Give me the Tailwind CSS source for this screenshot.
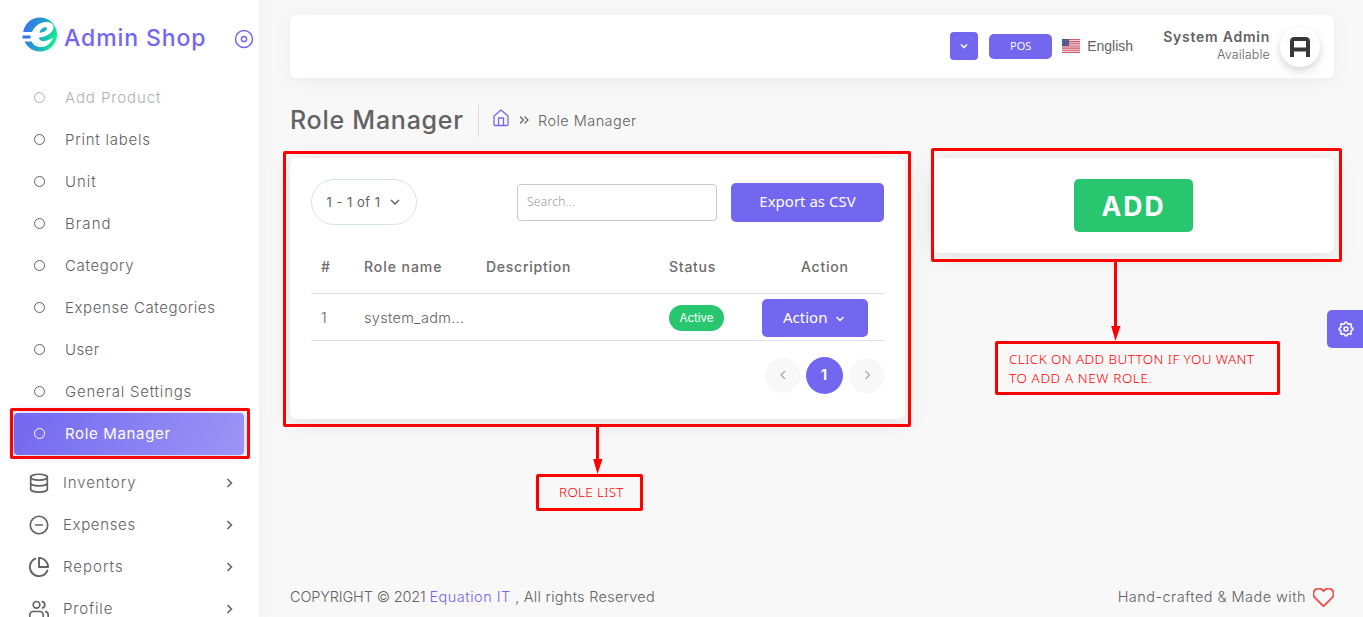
<!DOCTYPE html>
<html lang="en">
<head>
<meta charset="utf-8">
<title>Role Manager</title>
<script src="https://cdn.jsdelivr.net/npm/@tailwindcss/browser@4"></script>
</head>
<body class="relative h-[617px] w-[1363px] overflow-hidden bg-[#f8f8f8] font-['Inter',sans-serif] text-[14px] text-[#626262]">
<div class="flex h-full">
  <aside class="relative h-full w-[259px] shrink-0 overflow-hidden bg-white shadow-[0_0_15px_rgba(0,0,0,0.05)]">
    <div class="flex h-[77px] items-center pl-[22px]">
      <svg class="-mt-2 size-[36px]" viewBox="0 0 36 36"><defs><linearGradient id="lg" x1="0" y1="0.3" x2="1" y2="0.6"><stop offset="0" stop-color="#3b6ff0"/><stop offset=".5" stop-color="#22a0cc"/><stop offset="1" stop-color="#0cf58c"/></linearGradient></defs><circle cx="18" cy="17.500" r="17" fill="url(#lg)"/><path d="M0 15h12v9.500H0z" fill="#fff"/><path d="M.5 18.500h8v3H.5z" fill="#2f78ea"/><path d="M9 19C10 11 17 5 24.500 5C32 5 33.500 11 29 15.500C26 18.500 22 20 17 20.500C17 24 21 25 25 23.500C27.500 22.500 29.500 21.500 31 20.500C29 27 23.500 30.500 18 30C12 29.500 8 25 9 19Z" fill="#fff"/><path d="M17.500 15.800C18 12 22 9.500 24.500 10.500C26.500 12 23 15.500 17.500 15.800Z" fill="#21adc4"/></svg>
      <span class="-mt-px ml-1.5 text-[23px] font-medium tracking-[0.9px] text-[#7367f0]">Admin Shop</span>
      <svg class="absolute left-[234px] top-[29px] size-5" viewBox="0 0 20 20" fill="none" stroke="#7367f0" stroke-width="1.500"><circle cx="10" cy="10" r="8.500"/><circle cx="10" cy="10" r="2.600"/></svg>
    </div>
    <nav class="text-[15px] font-light tracking-[0.65px]">
      <div class="flex h-[42px] items-center pl-[34px] opacity-50"><i class="-mt-px mr-5 size-[11px] rounded-full border border-[#626262]"></i><span class="tracking-[0.9px]">Add Product</span></div>
      <div class="flex h-[42px] items-center pl-[34px]"><i class="-mt-px mr-5 size-[11px] rounded-full border border-[#626262]"></i><span class="tracking-[0.75px]">Print labels</span></div>
      <div class="flex h-[42px] items-center pl-[34px]"><i class="-mt-px mr-5 size-[11px] rounded-full border border-[#626262]"></i><span class="tracking-[1px]">Unit</span></div>
      <div class="flex h-[42px] items-center pl-[34px]"><i class="-mt-px mr-5 size-[11px] rounded-full border border-[#626262]"></i><span class="tracking-[1.1px]">Brand</span></div>
      <div class="flex h-[42px] items-center pl-[34px]"><i class="-mt-px mr-5 size-[11px] rounded-full border border-[#626262]"></i>Category</div>
      <div class="flex h-[42px] items-center pl-[34px]"><i class="-mt-px mr-5 size-[11px] rounded-full border border-[#626262]"></i><span class="tracking-[0.6px]">Expense Categories</span></div>
      <div class="flex h-[42px] items-center pl-[34px]"><i class="-mt-px mr-5 size-[11px] rounded-full border border-[#626262]"></i><span class="tracking-[0.4px]">User</span></div>
      <div class="flex h-[42px] items-center pl-[34px]"><i class="-mt-px mr-5 size-[11px] rounded-full border border-[#626262]"></i><span class="tracking-[0.78px]">General Settings</span></div>
      <div class="mx-[14px] flex h-[42px] w-[230px] items-center rounded bg-linear-118 from-[#7367f0] to-[#9e95f5] pl-5 font-normal text-white shadow-[0_0_10px_1px_rgba(115,103,240,0.4)]"><i class="-mt-px mr-5 size-[11px] rounded-full border border-white"></i>Role Manager</div>
      <div class="mt-[7px] flex h-[42px] items-center pl-[29px]"><svg class="mr-[14px] size-5 fill-none stroke-[#626262] stroke-2" viewBox="0 0 24 24" stroke-linecap="round" stroke-linejoin="round"><ellipse cx="12" cy="5" rx="10" ry="3.500"/><path d="M22 12c0 1.900-4.500 3.500-10 3.500S2 13.900 2 12M2 5v14.500c0 1.900 4.500 3.500 10 3.500s10-1.600 10-3.500V5"/></svg><span class="tracking-[0.9px]">Inventory</span><svg class="ml-auto mr-6 size-3 fill-none stroke-[#626262] stroke-[1.5]" viewBox="0 0 12 12"><path d="M4.500 2l4 4-4 4"/></svg></div>
      <div class="flex h-[42px] items-center pl-[29px]"><svg class="mr-[14px] size-5 fill-none stroke-[#626262] stroke-2" viewBox="0 0 24 24" stroke-linecap="round"><circle cx="12" cy="12" r="10.500"/><path d="M8 12h8"/></svg>Expenses<svg class="ml-auto mr-6 size-3 fill-none stroke-[#626262] stroke-[1.5]" viewBox="0 0 12 12"><path d="M4.500 2l4 4-4 4"/></svg></div>
      <div class="flex h-[42px] items-center pl-[29px]"><svg class="mr-[14px] size-5 fill-none stroke-[#626262] stroke-[2.1]" viewBox="1 1 22 22" stroke-linecap="round" stroke-linejoin="round"><path d="M21.210 15.890A10 10 0 1 1 8 2.830M22 12A10 10 0 0 0 12 2v10z"/></svg><span class="tracking-[1px]">Reports</span><svg class="ml-auto mr-6 size-3 fill-none stroke-[#626262] stroke-[1.5]" viewBox="0 0 12 12"><path d="M4.500 2l4 4-4 4"/></svg></div>
      <div class="flex h-[42px] items-center pl-[29px]"><svg class="mr-[14px] size-5 fill-none stroke-[#626262] stroke-2" viewBox="0 0 24 24" stroke-linecap="round" stroke-linejoin="round"><path d="M17 21v-2a4 4 0 0 0-4-4H5a4 4 0 0 0-4 4v2M23 21v-2a4 4 0 0 0-3-3.870M16 3.130a4 4 0 0 1 0 7.750"/><circle cx="9" cy="7" r="4"/></svg><span class="tracking-[0.85px]">Profile</span><svg class="ml-auto mr-6 size-3 fill-none stroke-[#626262] stroke-[1.5]" viewBox="0 0 12 12"><path d="M4.500 2l4 4-4 4"/></svg></div>
    </nav>
  </aside>

  <main class="flex min-w-0 flex-1 flex-col pr-[29px] pl-[31px] pt-[15px]">
    <header class="flex h-[63px] shrink-0 items-center justify-end rounded-[7px] bg-white pr-[14px] pb-0.5 shadow-[0_4px_20px_rgba(0,0,0,0.05)]">
      <button class="mr-[11px] flex size-7 items-center justify-center rounded-[4px] bg-[#7367f0]"><svg class="size-2.5 fill-none stroke-white stroke-[1.5]" viewBox="0 0 10 10"><path d="M2 3.500l3 3 3-3"/></svg></button>
      <button class="mt-px mr-2.5 h-[25px] w-[63px] rounded-[5px] bg-[#7367f0] font-['Open_Sans',sans-serif] text-[11px] text-white">POS</button>
      <svg class="mr-[7px] h-[14px] w-[18px]" viewBox="0 0 18 14"><path fill="#f3d5d9" d="M0 0h18v14H0z"/><path stroke="#cf5a6b" stroke-width="1.100" d="M0 .5h18M0 2.660h18M0 4.820h18M0 6.980h18M0 9.140h18M0 11.300h18M0 13.460h18"/><path fill="#50548a" d="M0 0h7v7H0z"/><path stroke="#8084ad" stroke-width=".6" stroke-dasharray="1 1" d="M.5 1.500h6M1 3.500h6M.5 5.500h6"/></svg>
      <span class="mt-0.5 w-[76px] font-['Liberation_Sans',sans-serif] text-[14px]">English</span>
      <div class="mr-2.5 flex flex-col items-end"><span class="text-[14px] leading-[18px] font-semibold tracking-[0.75px]">System Admin</span><span class="text-[12.500px] leading-[17px] font-light tracking-[0.15px]">Available</span></div>
      <div class="mt-0.5 flex size-10 items-center justify-center rounded-full bg-white shadow-[0_4px_8px_rgba(0,0,0,0.16)]"><svg class="h-5 w-5 fill-none stroke-[#383838] stroke-[4]" viewBox="0 0 20 20"><path d="M2 20V4.500Q2 2 4.500 2h11Q18 2 18 4.500V20M2 12.500h16"/></svg></div>
    </header>

    <div class="mt-[27px] flex h-8 items-center">
      <h1 class="w-[189px] border-r border-[#d6dce1] text-[25px] leading-8 font-[450] tracking-[0.75px] whitespace-nowrap"><span class="relative -top-px">Role Manager</span></h1>
      <svg class="mr-2.5 ml-[14px] -mt-1.5 h-[18px] w-4 fill-none stroke-[#7367f0] stroke-[1.3]" viewBox="0 0 16 18" stroke-linejoin="round"><path d="M1 7l7-6 7 6v8.500q0 1-1 1H2q-1 0-1-1zM5.500 16.500V9h5v7.500"/></svg>
      <svg class="-mt-0.5 size-2.5 fill-none stroke-[#626262] stroke-[1.2]" viewBox="0 0 10 10"><path d="M1 1.500l3.500 3.500L1 8.500M5.500 1.500L9 5 5.500 8.500"/></svg>
      <span class="-mt-px ml-[9px] font-light text-[14.500px] tracking-[0.45px]">Role Manager</span>
    </div>

    <div class="mt-[21px] flex items-start gap-7">
      <section class="h-[261px] w-[615px] rounded-[7px] bg-white px-[21px] pt-[21px] shadow-[0_4px_25px_rgba(0,0,0,0.1)]">
        <div class="flex h-[46px] items-center">
          <button class="flex h-[46px] w-[106px] items-center rounded-full border border-[#dae1e7] pl-[14.500px] text-[13px] tracking-[0.5px]"><span class="mt-0.5">1 - 1 of 1</span><svg class="ml-[9px] size-2.5 fill-none stroke-[#626262] stroke-[1.5]" viewBox="0 0 10 10"><path d="M1 3l4 4 4-4"/></svg></button>
          <div class="ml-auto h-[37px] w-[200px] rounded-[4px] border border-[#c8c8c8] pl-[9px] font-['Noto_Sans',sans-serif] text-[12px] leading-[33px] font-light tracking-[0.3px] text-[#999]">Search...</div>
          <button class="ml-[14px] h-[39px] w-[153px] rounded-[5px] bg-[#7367f0] pb-0.5 font-['Noto_Sans',sans-serif] text-[15px] text-white">Export as CSV</button>
        </div>
        <table class="mt-[15px] w-full table-fixed text-left">
          <thead><tr class="h-[53px] border-b border-[#dee2e6] text-[14px] tracking-[0.6px] text-[#6b6b6b]">
            <th class="w-[43px] pl-2.5 font-medium">#</th><th class="w-[122px] pl-2.5 font-medium tracking-[0.95px]">Role name</th><th class="w-[183px] pl-2.5 font-medium tracking-[0.75px]">Description</th><th class="w-[92px] pl-2.5 font-medium tracking-[0.75px]">Status</th><th class="pl-[50px] font-medium tracking-[0.75px]">Action</th></tr></thead>
          <tbody><tr class="h-[47px] border-b border-[#dee2e6]">
            <td class="pl-2.5 pt-0.5 text-[14.500px] font-light">1</td><td class="pt-0.5 pl-2.5 text-[14.500px] font-light tracking-[0.3px]">system_adm...</td><td></td>
            <td class="pl-2.5"><div class="mt-0.5 h-[26px] w-[55px] rounded-full bg-[#28c76f] text-center text-[11.500px] leading-[26px] text-white">Active</div></td>
            <td class="p-0 pt-0.5 pl-[11px]"><button class="flex h-[38px] w-[106px] items-center rounded-[5px] bg-[#7367f0] pl-[21px] font-['Noto_Sans',sans-serif] text-[15px] text-white">Action<svg class="mt-0.5 ml-2 size-2.5 fill-none stroke-white stroke-[1.5]" viewBox="0 0 10 10"><path d="M1.500 3L5 6.500 8.500 3"/></svg></button></td>
          </tr></tbody>
        </table>
        <div class="mt-4 flex items-center justify-end gap-1.5">
          <div class="flex size-[35px] items-center justify-center rounded-full bg-[#f8f8f8]"><svg class="size-2.5 fill-none stroke-[#aaa] stroke-[1.2]" viewBox="0 0 10 10"><path d="M7 1L3 5l4 4"/></svg></div>
          <div class="flex size-[37px] items-center justify-center rounded-full bg-[#7367f0] pr-px pb-px text-[14px] font-bold text-white">1</div>
          <div class="flex size-[35px] items-center justify-center rounded-full bg-[#f8f8f8]"><svg class="size-2.5 fill-none stroke-[#aaa] stroke-[1.2]" viewBox="0 0 10 10"><path d="M3.500 1l4 4-4 4"/></svg></div>
        </div>
      </section>
      <section class="flex h-[95px] w-[401px] items-center justify-center rounded-[7px] bg-white shadow-[0_4px_25px_rgba(0,0,0,0.1)]">
        <button class="h-[53px] w-[119px] rounded-[5px] bg-[#28c76f] pt-[3px] text-[26.500px] font-bold tracking-[2px] text-white">ADD</button>
      </section>
    </div>

    <footer class="mt-auto mb-2 flex h-6 items-center justify-between text-[14.500px] font-light">
      <p class="whitespace-pre"><span class="tracking-[-0.15px]">COPYRIGHT © 2021 </span><span class="tracking-[0.5px] text-[#7367f0]">Equation IT</span><span class="tracking-[0.27px]"> , All rights Reserved</span></p>
      <p class="flex items-center tracking-[0.46px]">Hand-crafted &amp; Made with<svg class="ml-[7px] h-[19px] w-[21px] fill-none stroke-[#ea5455] stroke-2" viewBox="1.500 2.500 21 19.500" stroke-linejoin="round"><path d="M20.840 4.610a5.500 5.500 0 0 0-7.780 0L12 5.670l-1.060-1.060a5.500 5.500 0 0 0-7.780 7.780L12 21.230l8.840-8.840a5.500 5.500 0 0 0 0-7.780z"/></svg></p>
    </footer>
  </main>
</div>

<button class="absolute top-[310px] right-0 flex h-[38px] w-9 items-center justify-center rounded-l-[5px] bg-[#7367f0]"><svg class="ml-0.5 size-4 fill-none stroke-white stroke-[1.5]" viewBox="0 0 16 16" stroke-linejoin="round"><path d="M6.500 2.700L7.200 1.200h1.600l.7 1.500 1.300.5 1.600-.6 1.100 1.100-.6 1.600.5 1.300 1.400.6v1.600l-1.400.7-.5 1.300.6 1.500-1.100 1.100-1.600-.6-1.300.6-.7 1.400H7.200l-.7-1.400-1.300-.6-1.600.6-1.100-1.100.6-1.500-.5-1.300-1.400-.7V7.200l1.400-.6.5-1.300-.6-1.600 1.100-1.100 1.600.6z"/><circle cx="8" cy="8" r="2"/></svg></button>

<!-- callouts -->
<div class="font-['Noto_Sans',sans-serif] text-[13.500px] leading-[19px] font-light text-[#f00]">
  <div class="absolute top-[408px] left-[10px] h-[51px] w-[240px] rounded-[2px] border-3 border-[#f00]"></div>
  <div class="absolute top-[151px] left-[283px] h-[276px] w-[628px] rounded-[2px] border-3 border-[#f00]"></div>
  <div class="absolute top-[148px] left-[931px] h-[114px] w-[411px] rounded-[2px] border-3 border-[#f00]"></div>
  <div class="absolute top-[474px] left-[536px] h-[37px] w-[107px] rounded-[2px] border-3 border-[#f00] pt-1.5 pl-5 tracking-[0.3px]">ROLE LIST</div>
  <div class="absolute top-[341px] left-[995px] h-[54px] w-[285px] rounded-[2px] border-3 border-[#f00] pt-1.5 pl-[11px] whitespace-nowrap"><span class="tracking-[0.42px]">CLICK ON ADD BUTTON IF YOU WANT</span><br><span class="tracking-[0.6px]">TO ADD A NEW ROLE.</span></div>
  <svg class="absolute top-[426px] left-[593px] h-12 w-[10px] fill-[#f00]" viewBox="0 0 10 48"><path d="M3 0h3v33h3.500L4.500 48 .2 33H3z"/></svg>
  <svg class="absolute top-[261px] left-[1111px] h-20 w-[10px] fill-[#f00]" viewBox="0 0 10 80"><path d="M3 0h3v65h3.500L4.500 80 .2 65H3z"/></svg>
</div>
</body>
</html>
